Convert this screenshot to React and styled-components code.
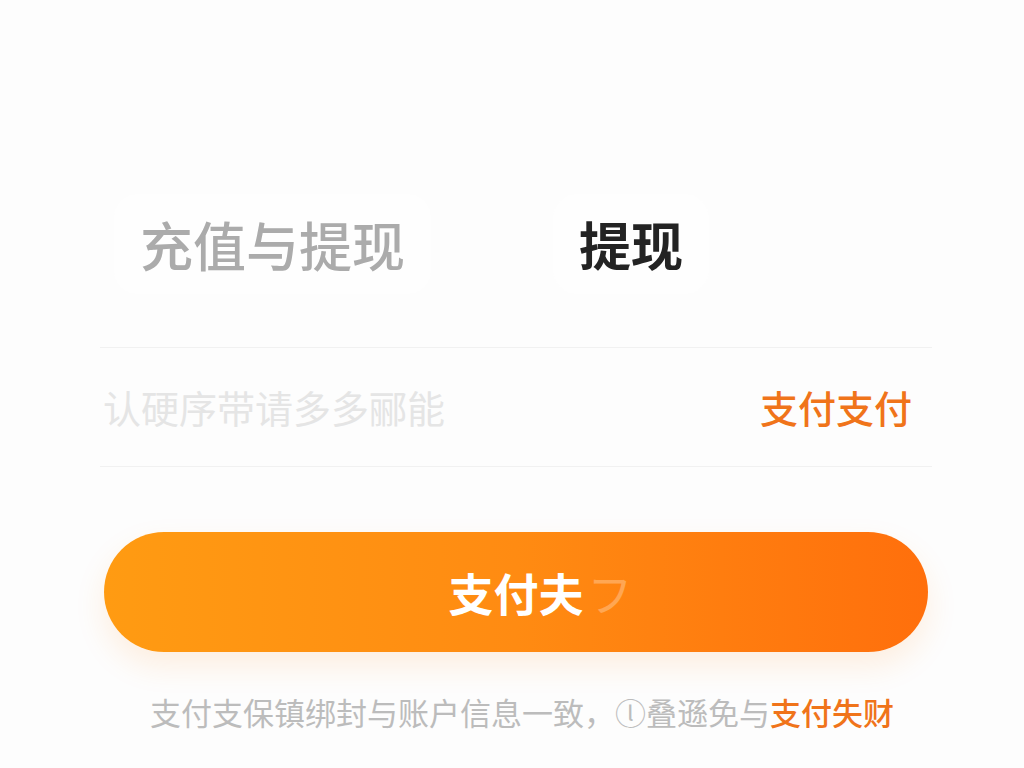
import React from "react";
import styled, { createGlobalStyle } from "styled-components";

const Global = createGlobalStyle`
  html, body { margin: 0; padding: 0; background: #fdfdfd; }
  body { font-family: "Noto Sans CJK SC", "Noto Sans", sans-serif; }
  #root { min-height: 768px; }
`;

const Page = styled.div`
  width: 1024px;
  height: 768px;
  box-sizing: border-box;
  padding: 194px 92px 0 100px;
  background: #fdfdfd;
  overflow: hidden;
`;

const Tabs = styled.div`
  display: flex;
  align-items: center;
  gap: 122px;
  padding-left: 14px;
  height: 100px;
`;

const Tab = styled.div`
  height: 100px;
  display: flex;
  align-items: center;
  padding: 0 26px;
  border-radius: 24px;
  background: #fefefe;
  box-shadow: 0 0 14px rgba(0, 0, 0, 0.008);
  font-size: ${(p) => (p.$active ? "52px" : "53px")};
  font-weight: ${(p) => (p.$active ? 700 : 500)};
  color: ${(p) => (p.$active ? "#232323" : "#ababab")};
  line-height: 1;
`;

const Field = styled.div`
  margin-top: 53px;
  height: 118px;
  border-top: 1px solid #f1f1f1;
  border-bottom: 1px solid #f1f1f1;
  display: flex;
  align-items: center;
  justify-content: space-between;
  padding: 0 20px 0 3px;
`;

const Placeholder = styled.span`
  font-size: 38px;
  color: #e5e5e5;
  line-height: 1;
`;

const Link = styled.span`
  font-size: ${(p) => p.$size || "38px"};
  font-weight: 500;
  color: #f0741a;
  line-height: 1;
`;

const Button = styled.button`
  display: flex;
  align-items: center;
  justify-content: center;
  margin: 65px 4px 0 4px;
  width: calc(100% - 8px);
  height: 120px;
  border: none;
  border-radius: 60px;
  background: linear-gradient(90deg, #ff9b12 0%, #ff8b12 50%, #ff6f0c 100%);
  box-shadow: 0 14px 30px rgba(255, 140, 30, 0.13);
  color: #ffffff;
  font-family: "Noto Sans CJK SC", sans-serif;
  font-size: 45px;
  font-weight: 600;
  line-height: 1;
  padding: 0;
`;

const Faded = styled.span`
  opacity: 0.28;
  font-weight: 400;
  margin-left: 4px;
  margin-right: -49px;
`;

const Note = styled.p`
  margin: 40px 0 0 50px;
  font-size: 31px;
  line-height: 40px;
  color: #bcbcbc;
  white-space: nowrap;
`;

export default function App() {
  return (
    <>
      <Global />
      <Page>
        <Tabs>
          <Tab>充值与提现</Tab>
          <Tab $active>提现</Tab>
        </Tabs>
        <Field>
          <Placeholder>认硬序带请多多郦能</Placeholder>
          <Link>支付支付</Link>
        </Field>
        <Button>
          支付夫<Faded>フ</Faded>
        </Button>
        <Note>
          支付支保镇绑封与账户信息一致，ⓛ叠遜免与<Link $size="31px">支付失财</Link>
        </Note>
      </Page>
    </>
  );
}
